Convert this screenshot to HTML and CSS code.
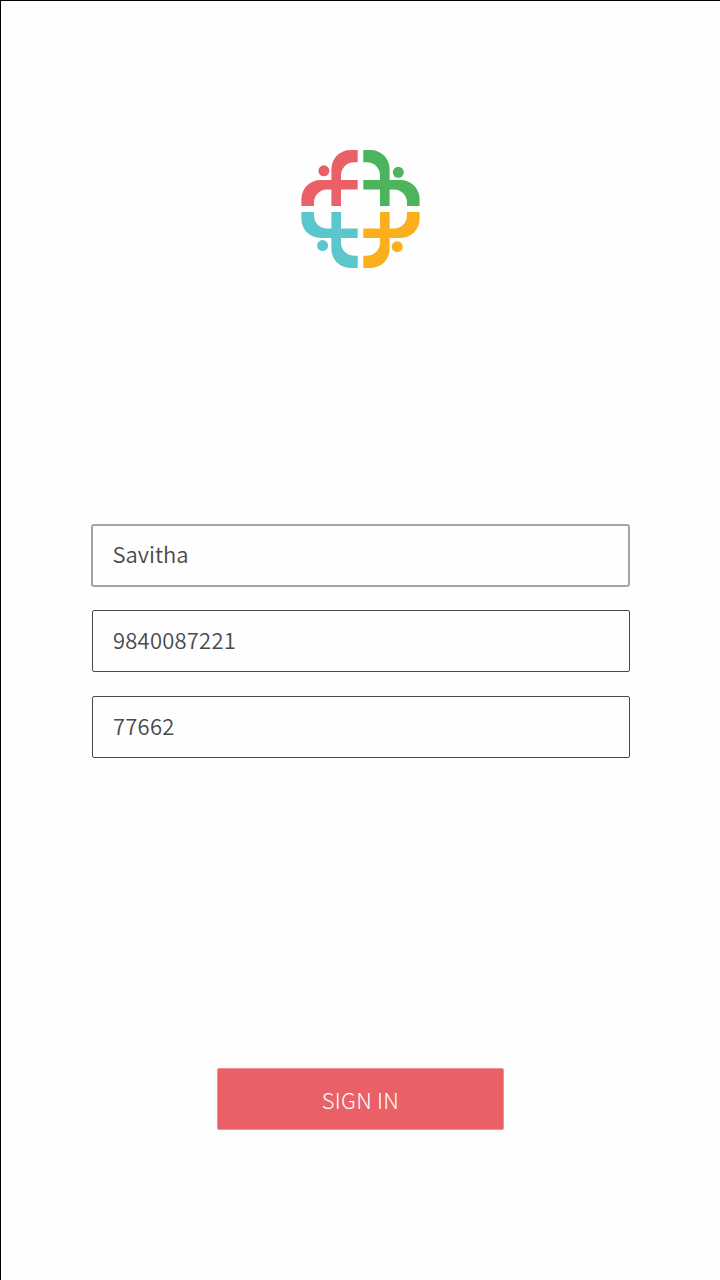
FILE: index.html
```
<!DOCTYPE html>
<html lang="en">
<head>
<meta charset="utf-8">
<title>Sign in</title>
<link rel="stylesheet" href="styles.css">
</head>
<body>
<main class="screen">
  <svg class="logo" viewBox="0 0 119 118" aria-hidden="true">
    <defs>
      <path id="arms" d="M56.7 0H49.4A19 19 0 0 0 30.4 19V56H40V25A13 13 0 0 1 53 12.3H56.7ZM56.7 30H19.5A19 19 0 0 0 .4 49V56H13V52.5A13 13 0 0 1 26 39.5H56.7Z"/>
    </defs>
    <g class="red"><use href="#arms"/><circle cx="22.9" cy="20.8" r="5.5"/></g>
    <g class="green"><use href="#arms" transform="matrix(-1 0 0 1 119 0)"/><circle cx="97.3" cy="22.3" r="5.5"/></g>
    <g class="teal"><use href="#arms" transform="matrix(1 0 0 -1 0 118)"/><circle cx="21.6" cy="95.6" r="5.5"/></g>
    <g class="yellow"><use href="#arms" transform="matrix(-1 0 0 -1 119 118)"/><circle cx="96.2" cy="96.7" r="5.5"/></g>
  </svg>
  <form class="form">
    <div class="fields">
      <div class="field field-active">Savitha</div>
      <div class="field">9840087221</div>
      <div class="field">77662</div>
    </div>
    <button class="submit" type="button">SIGN IN</button>
  </form>
</main>
</body>
</html>
```
FILE: styles.css
```
* { box-sizing: border-box; }
body { margin: 0; background: #fefefe; }
.screen {
  height: 1280px;
  padding-top: 149px;
  border-top: 1px solid #000;
  border-left: 1px solid #000;
  font-family: "Noto Sans CJK SC", "Noto Sans", sans-serif;
  font-size: 22px;
  font-weight: 350;
}
.logo { display: block; width: 119px; height: 118px; margin-left: 300px; overflow: visible; }
.red { fill: #ea6067; }
.green { fill: #4cb45c; }
.teal { fill: #5bc6cc; }
.yellow { fill: #fbaf1c; }
.form { padding: 256px 90px 0; }
.fields { display: flex; flex-direction: column; gap: 24px; }
.field {
  width: 538px;
  height: 62px;
  margin-left: 1px;
  padding-left: 20px;
  border: 1px solid #4a4a4a;
  border-radius: 2px;
  color: #4a4a4a;
  letter-spacing: 0.22px;
  line-height: 56px;
}
.field-active {
  width: 539px;
  height: 63px;
  margin: 0 0 -1px;
  padding-left: 19.5px;
  border: 2px solid #a4a4a4;
  border-radius: 3px;
  letter-spacing: 0;
  line-height: 54px;
}
.submit {
  display: block;
  width: 287px;
  height: 62px;
  margin: 310px 0 0 126px;
  padding: 0;
  border: 1px solid #f18f94;
  border-radius: 2px;
  background: #ea6067;
  color: #fff;
  font: inherit;
  font-weight: 300;
  letter-spacing: 0.25px;
  line-height: 60px;
}
```
